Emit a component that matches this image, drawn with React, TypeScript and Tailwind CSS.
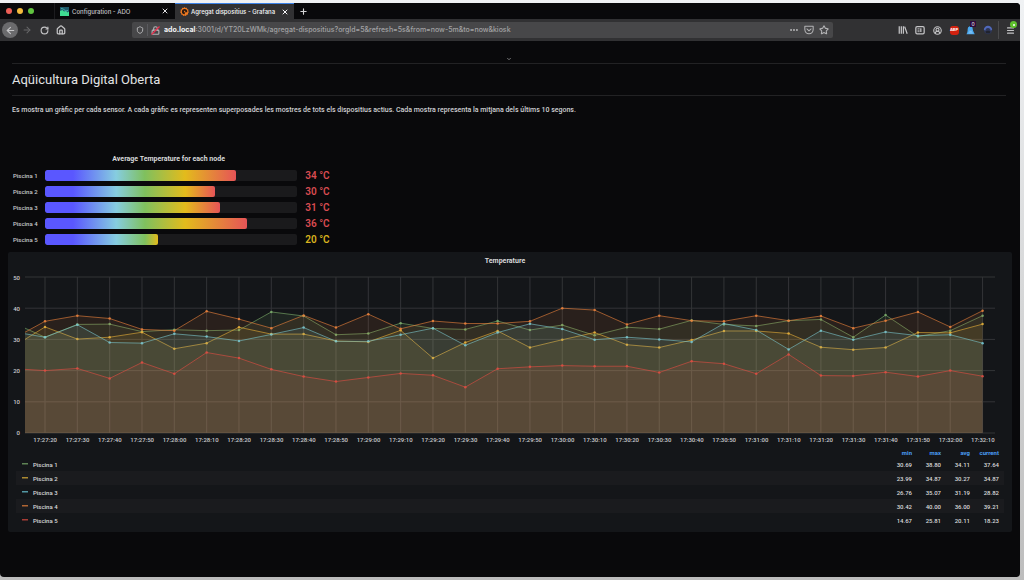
import React from "react";
import {
  ArrowLeft,
  ArrowRight,
  ChevronDown,
  CircleUserRound,
  Ellipsis,
  House,
  Lock,
  Menu,
  Plus,
  RotateCw,
  Shield,
  Star,
  X,
} from "lucide-react";

type Series = {
  name: string;
  color: string;
  min: string;
  max: string;
  avg: string;
  current: string;
  values: number[];
};

const SERIES: Series[] = [
  {
    name: "Piscina 1",
    color: "#7eb26d",
    min: "30.69",
    max: "38.80",
    avg: "34.11",
    current: "37.64",
    values: [
      33.6, 30.7, 34.8, 34.9, 32.5, 33.1, 32.8, 33, 38.8, 37.5, 31.5, 31.9, 35.2, 33.5, 33.2, 35.9, 33, 34.6, 31.3,
      33.9, 33.3, 36.1, 34.8, 34.3, 36, 36.4, 30.7, 37.8, 30.9, 32.8, 37.6,
    ],
  },
  {
    name: "Piscina 2",
    color: "#eab839",
    min: "23.99",
    max: "34.87",
    avg: "30.27",
    current: "34.87",
    values: [
      30, 34, 30.1, 30.7, 32.3, 27, 28.8, 33.9, 31.7, 31.7, 29.5, 29.2, 32.9, 24, 29, 32.7, 27.4, 29.9, 32.2, 28.3,
      27.4, 29.8, 32.7, 32.7, 31.9, 27.5, 26.7, 27.4, 32.2, 32.1, 34.9,
    ],
  },
  {
    name: "Piscina 3",
    color: "#6ed0e0",
    min: "26.76",
    max: "35.07",
    avg: "31.19",
    current: "28.82",
    values: [
      31.8, 30.7, 34.7, 29, 28.8, 31.8, 30.9, 29.5, 31.6, 33.8, 29.4, 29.4, 31.5, 33.6, 28.1, 32.2, 35, 33.3, 29.9,
      30.7, 30, 29.2, 35.1, 33, 26.8, 32.8, 29.9, 32.4, 31.2, 31.5, 28.8,
    ],
  },
  {
    name: "Piscina 4",
    color: "#ef843c",
    min: "30.42",
    max: "40.00",
    avg: "36.00",
    current: "39.21",
    values: [
      32.3, 35.8, 37.6, 36.7, 33.2, 32.8, 39, 36.5, 33.6, 37.7, 33.8, 38.1, 33.4, 35.9, 35.1, 35.1, 35.8, 40, 39.4,
      34.8, 37.6, 36, 35.8, 37.6, 36, 37.5, 33.6, 36, 38.8, 34, 39.2,
    ],
  },
  {
    name: "Piscina 5",
    color: "#e24d42",
    min: "14.67",
    max: "25.81",
    avg: "20.11",
    current: "18.23",
    values: [
      20.4, 20, 20.7, 17.5, 22.6, 19, 25.8, 24, 20.4, 18.1, 16.5, 17.8, 19.1, 18.5, 14.7, 20.6, 21.2, 21.6, 21.4, 21.4,
      19.4, 23, 22.2, 19, 25.2, 18.4, 18.3, 19.5, 18.1, 20, 18.2,
    ],
  },
];

const TIMES = Array.from({ length: 30 }, (_, i) => {
  const s = 27 * 60 + 20 + i * 10;
  return `17:${String(Math.floor(s / 60)).padStart(2, "0")}:${String(s % 60).padStart(2, "0")}`;
});

/* Plot coordinates: 970 x 156 units, 0 to 50 degrees. */
const PLOT_W = 970;
const PLOT_H = 156;
const tickX = (i: number) => 20 + i * 32.33;
const pointX = (i: number) => (i === 0 ? 0 : tickX(i - 1));
const valueY = (v: number) => PLOT_H - (v / 50) * PLOT_H;

const GAUGE_MAX = 45;
const GAUGE_STOPS = [
  { at: 5, color: "#5a57ff" },
  { at: 12.7, color: "#86cde0" },
  { at: 17.8, color: "#7fc05e" },
  { at: 25, color: "#e3bb1c" },
];

function gaugeFill(value: number) {
  const end = value > 25 ? "#e65457" : "#e3bb1c";
  const stops = GAUGE_STOPS.filter((s) => s.at < value).map((s) => `${s.color} ${(s.at / value) * 100}%`);
  return `linear-gradient(90deg, ${GAUGE_STOPS[0].color} 0%, ${stops.join(", ")}, ${end} 100%)`;
}

function AdoLogo() {
  return (
    <svg viewBox="0 0 18 18" className="size-[9px] shrink-0" aria-hidden="true">
      <rect width="18" height="18" rx="1" fill="#3fdc92" />
      <path d="M0 0h18v9l-3 2-3-3-4 1-3-3-5 2z" fill="#1f5a6b" />
      <path d="M2 3l5 1 4 4 5-1" stroke="#52c8c0" strokeWidth="1.5" fill="none" />
    </svg>
  );
}

function GrafanaLogo() {
  return (
    <svg viewBox="0 0 24 24" className="size-[9px] shrink-0" aria-hidden="true">
      <path
        d="M12 0l2.6 2.6 3.7-.6.9 3.6 3.6 1.6-1 3.6 2.2 3-2.8 2.5.3 3.8-3.8.6-1.9 3.2-3.5-1.4-3.5 1.4-2-3.1-3.8-.6.2-3.8L.2 13.9l2-3.1-1-3.6 3.5-1.5 1-3.7 3.7.6z"
        fill="#f0791f"
      />
      <path
        d="M18 12.5a5.8 5.8 0 1 0-6 5.7M15.5 13a3.2 3.2 0 1 0-3.5 2.5"
        fill="none"
        stroke="#2b1a10"
        strokeWidth="2.8"
        strokeLinecap="round"
      />
    </svg>
  );
}

function PocketIcon() {
  return (
    <svg viewBox="0 0 24 24" className="size-[10px]" fill="none" stroke="currentColor" strokeWidth="2.5" aria-hidden="true">
      <path d="M2 3h20v8a10 10 0 0 1-20 0z" strokeLinejoin="round" />
      <path d="M7 9.5l5 4.5 5-4.5" strokeLinecap="round" strokeLinejoin="round" />
    </svg>
  );
}

function LibraryIcon() {
  return (
    <svg viewBox="0 0 24 24" className="size-[10px]" fill="none" stroke="currentColor" strokeWidth="3" aria-hidden="true">
      <path d="M3 3v18M8 3v18M13 3v18M16 4l6 17" />
    </svg>
  );
}

function SidebarIcon() {
  return (
    <svg viewBox="0 0 24 24" className="size-[10px]" fill="none" stroke="currentColor" strokeWidth="3" aria-hidden="true">
      <rect x="2" y="4" width="20" height="17" rx="3" />
      <path d="M6 9h5M6 12.5h5M6 16h5" strokeWidth="2" />
      <path d="M14 8v9" />
    </svg>
  );
}

function InsecureLockIcon() {
  return (
    <span className="relative grid size-[9px] place-items-center">
      <Lock className="size-[9px] text-[#b4b4b6]" strokeWidth={3} />
      <svg viewBox="0 0 9 9" className="absolute inset-0 size-[9px]" aria-hidden="true">
        <path d="M0.5 8.5l8-8" stroke="#e8304f" strokeWidth="1.2" />
      </svg>
    </span>
  );
}

function AdblockIcon() {
  return (
    <span className="grid size-[9px] place-items-center rounded-[3px] bg-[#d3210f] text-[4px] leading-none font-bold text-white">
      ABP
    </span>
  );
}

function GhostIcon() {
  return (
    <span className="relative block size-[10px]">
      <svg viewBox="0 0 24 24" className="size-[10px]" aria-hidden="true">
        <path d="M4 10a7 7 0 0 1 11-6l2 10 4 8H1c2-3 3-7 3-12z" fill="#4aa8ee" />
        <path d="M8 15h6M6 19h10" stroke="#b5dcff" strokeWidth="1.5" />
      </svg>
      <span className="absolute -top-1 left-1 grid size-[6px] place-items-center bg-[#2d0b3c] text-[5px] leading-none text-white">
        0
      </span>
    </span>
  );
}

function MaskIcon() {
  return (
    <svg viewBox="0 0 24 24" className="size-[10px]" aria-hidden="true">
      <circle cx="12" cy="12" r="10" fill="#2e3654" />
      <path d="M2 12a10 10 0 0 1 20 0l-4 1a6 6 0 0 0-12 0z" fill="#5068b8" />
      <path d="M6 16c3-3 9-3 12 0l-2 4H8z" fill="#20232e" />
    </svg>
  );
}

function IconButton({ label, children }: { label: string; children: React.ReactNode }) {
  return (
    <button type="button" aria-label={label} className="grid size-[10px] shrink-0 place-items-center">
      {children}
    </button>
  );
}

function BrowserTabs() {
  return (
    <div className="flex h-4 items-stretch bg-[#09090b] text-[6px] text-[#c4c4c8]">
      <div className="flex w-[55px] shrink-0 items-center gap-[5px] border-r border-[#1c1c1f] pl-1.5">
        <span className="size-[6px] rounded-full bg-[#ee5f57]" />
        <span className="size-[6px] rounded-full bg-[#f5bb3d]" />
        <span className="size-[6px] rounded-full bg-[#61c440]" />
      </div>
      <div className="flex w-[120px] shrink-0 items-center gap-[3px] pr-1.5 pl-[5px] font-medium">
        <AdoLogo />
        <span className="flex-1 whitespace-nowrap">Configuration - ADO</span>
        <button type="button" aria-label="Close tab">
          <X className="size-[8px] text-[#e0e0e2]" strokeWidth={3} />
        </button>
      </div>
      <div className="flex w-[119px] shrink-0 items-center gap-[2px] border-t border-[#3b82e8] bg-[#313133] pr-[5px] pl-[5px] font-medium text-[#f8f8fa]">
        <GrafanaLogo />
        <span className="flex-1 whitespace-nowrap">Agregat dispositius - Grafana</span>
        <button type="button" aria-label="Close tab">
          <X className="size-[8px]" strokeWidth={3} />
        </button>
      </div>
      <button type="button" aria-label="New tab" className="pl-[5px]">
        <Plus className="size-[9px] text-[#d4d4d6]" strokeWidth={3} />
      </button>
    </div>
  );
}

function BrowserToolbar() {
  return (
    <div className="flex h-[22px] items-center bg-[#313133] text-[#c4c4c6]">
      <div className="flex w-[132px] shrink-0 items-center gap-1 pl-0.5">
        <button type="button" aria-label="Back" className="grid size-4 place-items-center rounded-full bg-[#6b6b6d]">
          <ArrowLeft className="size-[11px]" strokeWidth={2.5} />
        </button>
        <div className="flex items-center gap-[7px]">
          <IconButton label="Forward">
            <ArrowRight className="size-[10px] text-[#68686a]" strokeWidth={2.5} />
          </IconButton>
          <IconButton label="Reload">
            <RotateCw className="size-[9px]" strokeWidth={3} />
          </IconButton>
          <IconButton label="Home">
            <House className="size-[10px]" strokeWidth={3} />
          </IconButton>
        </div>
      </div>
      <div className="flex h-4 min-w-0 flex-[7] items-center rounded-xs bg-[#474749] px-1">
        <Shield className="size-[8px] text-[#b0b0b2]" strokeWidth={3} />
        <span className="mx-[3px] h-3 w-px bg-[#5a5a5e]" />
        <InsecureLockIcon />
        <span className="ml-1 flex-1 truncate text-[7px] font-medium text-[#a2a2a4]">
          <b className="font-bold text-[#f4f4f6]">ado.local</b>
          :3001/d/YT20LzWMk/agregat-dispositius?orgId=5&amp;refresh=5s&amp;from=now-5m&amp;to=now&amp;kiosk
        </span>
        <div className="flex items-center gap-[5px] text-[#b4b4b6]">
          <IconButton label="Page actions">
            <Ellipsis className="size-[10px]" strokeWidth={3} />
          </IconButton>
          <IconButton label="Save to Pocket">
            <PocketIcon />
          </IconButton>
          <IconButton label="Bookmark">
            <Star className="size-[10px]" strokeWidth={2.5} />
          </IconButton>
        </div>
      </div>
      <div className="flex w-[187px] shrink-0 items-center justify-end gap-[5px] pr-1">
        <div className="flex items-center gap-[7px]">
          <IconButton label="Library">
            <LibraryIcon />
          </IconButton>
          <IconButton label="Sidebars">
            <SidebarIcon />
          </IconButton>
          <IconButton label="Account">
            <CircleUserRound className="size-[9px]" strokeWidth={3} />
          </IconButton>
          <IconButton label="Ad blocker">
            <AdblockIcon />
          </IconButton>
          <IconButton label="Tracker blocker">
            <GhostIcon />
          </IconButton>
          <IconButton label="Privacy mask">
            <MaskIcon />
          </IconButton>
        </div>
        <div className="flex h-[18px] items-center border-l border-[#4a4a4c] pl-[7px]">
          <button type="button" aria-label="Menu" className="relative size-[10px]">
            <Menu className="size-[9px]" strokeWidth={3} />
            <span className="absolute -top-1 left-1 grid size-[7px] place-items-center rounded-full bg-[#5fc02c]">
              <span className="size-[2px] rounded-full bg-white" />
            </span>
          </button>
        </div>
      </div>
    </div>
  );
}

function TemperatureGauges() {
  return (
    <section className="w-[32%]">
      <h2 className="text-center text-[7px] leading-[10px] font-bold text-[#d8d9da]">
        Average Temperature for each node
      </h2>
      <ul className="mt-[5px] flex flex-col gap-[3px]">
        {SERIES.map((s) => {
          const value = Number(s.avg);
          return (
            <li key={s.name} className="flex h-[13px] items-center">
              <span className="w-[37px] shrink-0 pl-[5px] text-[6px] font-medium whitespace-nowrap text-[#c8c9cc]">
                {s.name}
              </span>
              <div className="h-[11px] flex-1 overflow-hidden rounded-xs bg-[#1a1a1c]">
                <div
                  className="h-full rounded-xs"
                  style={{ width: `${(value / GAUGE_MAX) * 100}%`, backgroundImage: gaugeFill(value) }}
                />
              </div>
              <span
                className={
                  value > 25
                    ? "w-8 shrink-0 pl-2 text-[10px] font-semibold whitespace-nowrap text-[#d94c51]"
                    : "w-8 shrink-0 pl-2 text-[10px] font-semibold whitespace-nowrap text-[#d9b21e]"
                }
              >
                {Math.round(value)} °C
              </span>
            </li>
          );
        })}
      </ul>
    </section>
  );
}

function TemperaturePlot() {
  return (
    <div className="mt-[11px] flex">
      <div className="flex h-[156px] w-[17px] shrink-0 flex-col justify-between pr-[5px] text-right text-[6px] font-medium text-[#c9cacd]">
        {[50, 40, 30, 20, 10, 0].map((v) => (
          <span key={v} className="flex h-0 items-center justify-end">
            {v}
          </span>
        ))}
      </div>
      <div className="min-w-0 flex-1 pr-[17px]">
        <svg
          viewBox={`0 0 ${PLOT_W} ${PLOT_H}`}
          preserveAspectRatio="none"
          className="block h-[156px] w-full overflow-visible"
          role="img"
          aria-label="Temperature of each node over the last five minutes"
        >
          <g stroke="#333437" strokeWidth="1">
            {[0, 10, 20, 30, 40, 50].map((v) => (
              <path key={v} d={`M0 ${valueY(v)}H${PLOT_W}`} vectorEffect="non-scaling-stroke" />
            ))}
            {TIMES.map((t, i) => (
              <path key={t} d={`M${tickX(i)} 0V${PLOT_H}`} vectorEffect="non-scaling-stroke" />
            ))}
          </g>
          {SERIES.map((s) => {
            const line = s.values.map((v, i) => `${pointX(i)} ${valueY(v)}`).join("L");
            const last = pointX(s.values.length - 1);
            return (
              <g key={s.name}>
                <path d={`M${line}L${last} ${PLOT_H}L0 ${PLOT_H}Z`} fill={s.color} fillOpacity="0.1" />
                <path
                  d={`M${line}`}
                  fill="none"
                  stroke={s.color}
                  strokeOpacity="0.6"
                  strokeWidth="1"
                  vectorEffect="non-scaling-stroke"
                />
                {s.values.slice(1).map((v, i) => (
                  <path
                    key={i}
                    d={`M${tickX(i)} ${valueY(v)}h0.01`}
                    stroke={s.color}
                    strokeOpacity="0.85"
                    strokeWidth="2.5"
                    strokeLinecap="round"
                    vectorEffect="non-scaling-stroke"
                  />
                ))}
              </g>
            );
          })}
        </svg>
        <div className="mt-[3px] -mr-1 ml-1 grid grid-cols-30 text-[6px] leading-[8px] font-medium text-[#c9cacd]">
          {TIMES.map((t) => (
            <span key={t} className="text-center">
              {t}
            </span>
          ))}
        </div>
      </div>
    </div>
  );
}

function LegendTable() {
  return (
    <div className="mt-[3px] px-2">
      <table className="w-full table-fixed border-collapse text-right text-[6px] font-medium text-[#d8d9da]">
        <thead>
          <tr className="h-[10px] text-[#4a9df5]">
            <th scope="col" aria-label="Series" />
            <th scope="col" className="w-[29px] font-bold">min</th>
            <th scope="col" className="w-[29px] font-bold">max</th>
            <th scope="col" className="w-[29px] font-bold">avg</th>
            <th scope="col" className="w-[34px] pr-[5px] font-bold">current</th>
          </tr>
        </thead>
        <tbody>
          {SERIES.map((s) => (
            <tr key={s.name} className="h-[14px] even:bg-[#1a1b1e]">
              <th scope="row" className="pl-[6px] text-left font-medium">
                <span className="flex items-center gap-[5px]">
                  <svg viewBox="0 0 6 2" className="h-[2px] w-[6px]" aria-hidden="true">
                    <rect width="6" height="1.5" fill={s.color} fillOpacity="0.7" />
                  </svg>
                  {s.name}
                </span>
              </th>
              <td>{s.min}</td>
              <td>{s.max}</td>
              <td>{s.avg}</td>
              <td className="pr-[5px]">{s.current}</td>
            </tr>
          ))}
        </tbody>
      </table>
    </div>
  );
}

export default function App() {
  return (
    <div className="flex min-h-screen flex-col bg-linear-to-b from-[#f0f2f4] to-[#bdbdbd] pt-[3px] pr-1 pb-[3px] font-['Inter','Liberation_Sans',sans-serif]">
      <div className="flex flex-1 flex-col overflow-hidden rounded-tr-sm rounded-b-sm bg-[#09090b]">
        <header>
          <BrowserTabs />
          <BrowserToolbar />
        </header>
        <main className="flex-1 px-2 pt-[13px] font-['Roboto','Liberation_Sans',sans-serif]">
          <div className="mr-1.5 ml-1">
            <div className="flex h-[10px] items-center justify-center border-b border-[#222224]">
              <ChevronDown className="size-[6px] text-[#9a9a9c]" strokeWidth={3} />
            </div>
            <h1 className="border-b border-[#222224] py-[7px] text-[13px] leading-[17px] text-[#e2e3e4]">
              Aqüicultura Digital Oberta
            </h1>
            <p className="mt-2 text-[7px] leading-3 font-medium text-[#d0d1d4]">
              Es mostra un gràfic per cada sensor. A cada gràfic es representen superposades les mostres de tots els
              dispositius actius. Cada mostra representa la mitjana dels últims 10 segons.
            </p>
          </div>
          <div className="mt-[38px]">
            <TemperatureGauges />
          </div>
          <section className="mt-[6px] rounded-xs bg-[#141619] pt-1 pb-[5px]">
            <h2 className="pr-2.5 text-center text-[7px] leading-[10px] font-bold text-[#d8d9da]">Temperature</h2>
            <TemperaturePlot />
            <LegendTable />
          </section>
        </main>
      </div>
    </div>
  );
}
